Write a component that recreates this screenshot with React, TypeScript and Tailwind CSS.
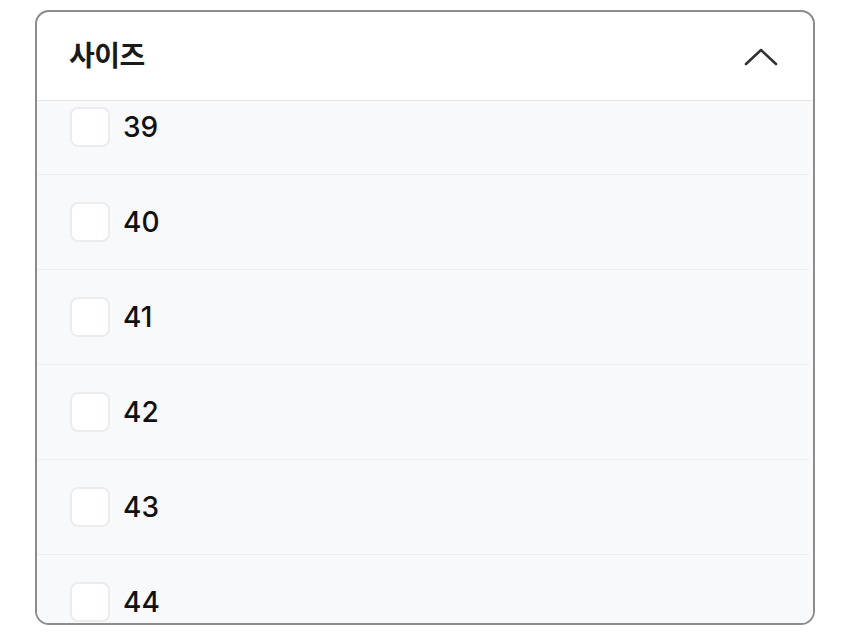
import React, { useState } from "react";

const sizes = ["39", "40", "41", "42", "43", "44"];

function SizeFilter() {
    const [checked, setChecked] = useState<string[]>([]);

    const toggle = (size: string) => {
        setChecked((prev) =>
            prev.includes(size) ? prev.filter((s) => s !== size) : [...prev, size]
        );
    };

    return (
        <div className="mx-[35px] mt-[10px] h-[615px] flex flex-col overflow-hidden rounded-[14px] border-2 border-[#8c8c8c] bg-white">
            <div className="flex h-[89px] shrink-0 items-center justify-between border-b border-[#e6e8eb] pl-[32px] pr-[35px]">
                <h2 className="text-[28px] font-bold text-[#1a1a1a] leading-none tracking-[-0.5px]">
                    사이즈
                </h2>
                <svg width="34" height="20" viewBox="0 0 34 20" fill="none" className="mt-[2px]">
                    <path d="M2 17 L17 3 L32 17" stroke="#333" strokeWidth="2.6" strokeLinecap="round" strokeLinejoin="round" />
                </svg>
            </div>

            <div className="flex-1 overflow-hidden bg-[#f8f9fb] pr-[4px]">
                <ul className="-mt-[21px]">
                    {sizes.map((size) => (
                        <li
                            key={size}
                            onClick={() => toggle(size)}
                            className="flex h-[95px] cursor-pointer items-center gap-[13px] border-b border-[#eceef1] pl-[33px]"
                        >
                            <span
                                className={`h-[40px] w-[40px] rounded-[8px] border-2 ${
                                    checked.includes(size)
                                        ? "border-gray-800 bg-gray-800"
                                        : "border-[#ececee] bg-white"
                                }`}
                            />
                            <span className="text-[28px] font-medium text-[#111] leading-none">{size}</span>
                        </li>
                    ))}
                </ul>
            </div>
        </div>
    );
}

export default function App() {
    return (
        <div className="h-[635px] w-[850px] bg-white" style={{ fontFamily: '"Inter", "Noto Sans CJK KR", sans-serif' }}>
            <SizeFilter />
        </div>
    );
}
